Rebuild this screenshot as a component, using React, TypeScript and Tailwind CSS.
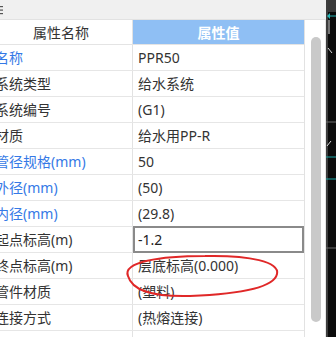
import React from 'react';

const rows: { name: string; value: string; blue?: boolean; edit?: boolean }[] = [
  { name: '名称', value: 'PPR50', blue: true },
  { name: '系统类型', value: '给水系统' },
  { name: '系统编号', value: '(G1)' },
  { name: '材质', value: '给水用PP-R' },
  { name: '管径规格(mm)', value: '50', blue: true },
  { name: '外径(mm)', value: '(50)', blue: true },
  { name: '内径(mm)', value: '(29.8)', blue: true },
  { name: '起点标高(m)', value: '-1.2', edit: true },
  { name: '终点标高(m)', value: '层底标高(0.000)' },
  { name: '管件材质', value: '(塑料)' },
  { name: '连接方式', value: '(热熔连接)' },
  { name: '', value: '' },
];

export default function App() {
  return (
    <div
      className="relative w-[336px] h-[337px] overflow-hidden bg-white flex text-[14px] text-[#333]"
      style={{ fontFamily: '"Noto Sans", "Noto Sans CJK SC", sans-serif' }}
    >
      <div className="w-[326px] flex flex-col">
        {/* title strip */}
        <div className="h-[20px] shrink-0 bg-[#f0f0f0] border-b border-[#e2e2e2] flex items-center">
          <svg width="4" height="10">
            <rect x="0" y="1" width="3" height="1.2" fill="#555" />
            <rect x="0" y="4.5" width="3" height="1.2" fill="#555" />
            <rect x="0" y="8" width="3" height="1.2" fill="#555" />
          </svg>
        </div>

        <div className="flex flex-1 min-h-0">
          {/* property grid */}
          <div className="w-[305px] border-r border-[#e2e2e2] overflow-hidden">
            <div className="flex h-[25px] border-b border-[#e4e4e4]">
              <div className="w-[133px] border-r border-[#e2e2e2] flex items-center justify-center pr-[10px]">
                属性名称
              </div>
              <div className="flex-1 bg-[#8fbff4] flex items-center justify-center text-white font-semibold">
                属性值
              </div>
            </div>
            {rows.map((r, i) => (
              <div key={i} className="flex h-[26px] border-b border-[#e6e6e6]">
                <div className="w-[133px] border-r border-[#e2e2e2] flex items-center overflow-hidden whitespace-nowrap">
                  <span className={`-ml-[5px] ${r.blue ? 'text-[#3579e6]' : 'text-[#333]'}`}>{r.name}</span>
                </div>
                {r.edit ? (
                  <div className="flex-1 border-2 border-[#8a8a8a] -my-[1px] flex items-center pl-[3px] text-[#222]">
                    {r.value}
                  </div>
                ) : (
                  <div className="flex-1 flex items-center pl-[5px] whitespace-nowrap">{r.value}</div>
                )}
              </div>
            ))}
          </div>

          {/* scroll bar */}
          <div className="w-[21px] bg-white border-r border-[#e6e6e6] flex justify-start pl-[6px] pt-[17px]">
            <div className="w-[10px] h-[285px] bg-[#c9c9c9] rounded-full" />
          </div>
        </div>
      </div>

      {/* CAD canvas edge */}
      <div className="w-[10px] bg-[#0c0c0c]">
        <svg width="10" height="337">
          <rect x="0" y="0" width="10" height="12" fill="#3a3a3a" />
          <rect x="0" y="0" width="2" height="337" fill="#3d3d3d" />
          <polygon points="1,16 4,13 4,19" fill="#27b5b5" />
          <line x1="4" y1="16" x2="10" y2="16" stroke="#27b5b5" strokeWidth="1" />
          <line x1="3" y1="20" x2="3" y2="34" stroke="#dcdcdc" strokeWidth="1" />
          <line x1="2" y1="48" x2="6" y2="53" stroke="#dcdcdc" strokeWidth="1" />
          <line x1="0" y1="122" x2="10" y2="122" stroke="#6a6a6a" strokeWidth="1" />
          <line x1="1" y1="146" x2="5" y2="141" stroke="#dcdcdc" strokeWidth="1" />
          <line x1="0" y1="157" x2="10" y2="157" stroke="#1aa8a8" strokeWidth="1" />
          <line x1="0" y1="179" x2="10" y2="179" stroke="#1aa8a8" strokeWidth="1" />
          <line x1="0" y1="248" x2="10" y2="248" stroke="#6a6a6a" strokeWidth="1" />
        </svg>
      </div>

      {/* hand-drawn red annotation */}
      <svg className="absolute left-0 top-0 pointer-events-none" width="336" height="337">
        <path
          d="M 128 276 C 122 262, 160 256, 205 256 C 250 255, 280 262, 277 274 C 274 288, 240 294, 190 296 C 150 297, 132 290, 128 276 Z"
          fill="none"
          stroke="#e02828"
          strokeWidth="2"
        />
      </svg>
    </div>
  );
}
